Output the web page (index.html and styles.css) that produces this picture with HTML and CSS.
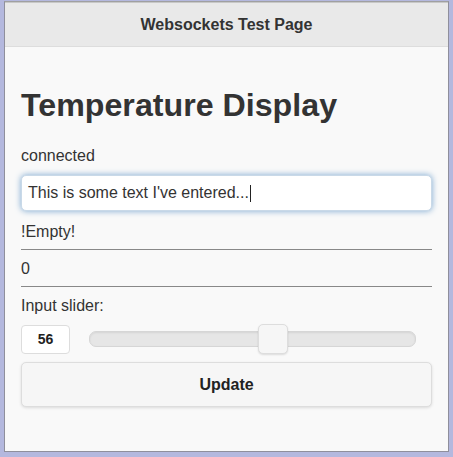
FILE: index.html
```html
<!DOCTYPE html>
<html>
<head>
<meta charset="utf-8">
<link rel="stylesheet" href="styles.css">
</head>
<body>
<div class="frame">
  <div class="page">
    <header class="bar">Websockets Test Page</header>
    <main class="content">
      <h1 class="title">Temperature Display</h1>
      <p class="line status">connected</p>
      <div class="textbox">This is some text I've entered...<span class="caret"></span></div>
      <p class="line after-input">!Empty!</p>
      <hr class="rule">
      <p class="line">0</p>
      <hr class="rule">
      <p class="line label">Input slider:</p>
      <div class="slider">
        <div class="num">56</div>
        <div class="track"><div class="thumb"></div></div>
      </div>
      <div class="btn">Update</div>
    </main>
  </div>
</div>
</body>
</html>
```
FILE: styles.css
```css
html, body { margin: 0; padding: 0; }
body {
  width: 453px; height: 457px;
  background: #b4b8de;
  font-family: "Liberation Sans", Arial, sans-serif;
  color: #333;
  overflow: hidden;
}
.frame {
  box-sizing: border-box;
  width: 453px; height: 457px;
  padding: 1px 4px 5px 4px;
}
.page {
  box-sizing: border-box;
  height: 100%;
  background: #f9f9f9;
  border: 1px solid #8f8f9c;
  border-top: 1px solid #a0a0a0;
  display: flex; flex-direction: column;
}
.bar {
  height: 43px;
  background: #e9e9e9;
  border-top: 1px solid #c8c8c8;
  border-bottom: 1px solid #ddd;
  display: flex; align-items: center; justify-content: center;
  font-weight: bold; font-size: 16px; color: #333;
}
.content {
  padding: 0 16px;
  display: flex; flex-direction: column;
}
.title {
  margin: 39px 0 0 0;
  font-size: 32.2px; line-height: 38px;
  font-weight: bold; color: #333;
}
.line { margin: 0; font-size: 16px; line-height: 20px; color: #333; }
.status { margin-top: 22px; }
.textbox {
  margin-top: 9px;
  box-sizing: border-box;
  height: 36px;
  background: #fff;
  border: 1px solid #c9d9e8;
  border-radius: 5px;
  box-shadow: 0 0 6px #7ba7d0;
  padding: 0 6px;
  display: flex; align-items: center;
  font-size: 16px; color: #333;
}
.caret { display: inline-block; width: 1px; height: 17px; background: #222; margin-left: 1px; }
.after-input { margin-top: 11px; }
.rule { margin: 7px 0 9px 0; border: 0; border-top: 1px solid #888; height: 0; }
.label { margin-top: 0; }
.slider {
  margin-top: 8px;
  display: flex; align-items: center;
  height: 30px;
}
.num {
  box-sizing: border-box;
  width: 49px; height: 29px;
  background: #fff;
  border: 1px solid #ddd;
  border-radius: 4px;
  display: flex; align-items: center; justify-content: center;
  font-weight: bold; font-size: 14px; color: #222;
}
.track {
  position: relative;
  box-sizing: border-box;
  margin-left: 19px;
  width: 327px; height: 16px;
  background: #e6e6e6;
  border: 1px solid #d6d6d6;
  border-radius: 7px;
  box-shadow: inset 0 1px 2px rgba(0,0,0,0.08);
}
.thumb {
  position: absolute;
  left: 168px; top: -8px;
  box-sizing: border-box;
  width: 30px; height: 30px;
  background: #f6f6f6;
  border: 1px solid #ddd;
  border-radius: 5px;
  box-shadow: 0 1px 2px rgba(0,0,0,0.12);
}
.btn {
  margin-top: 8px;
  box-sizing: border-box;
  height: 45px;
  background: #f6f6f6;
  border: 1px solid #ddd;
  border-radius: 5px;
  box-shadow: 0 1px 3px rgba(0,0,0,0.12);
  display: flex; align-items: center; justify-content: center;
  font-weight: bold; font-size: 16px; color: #222;
}
```
